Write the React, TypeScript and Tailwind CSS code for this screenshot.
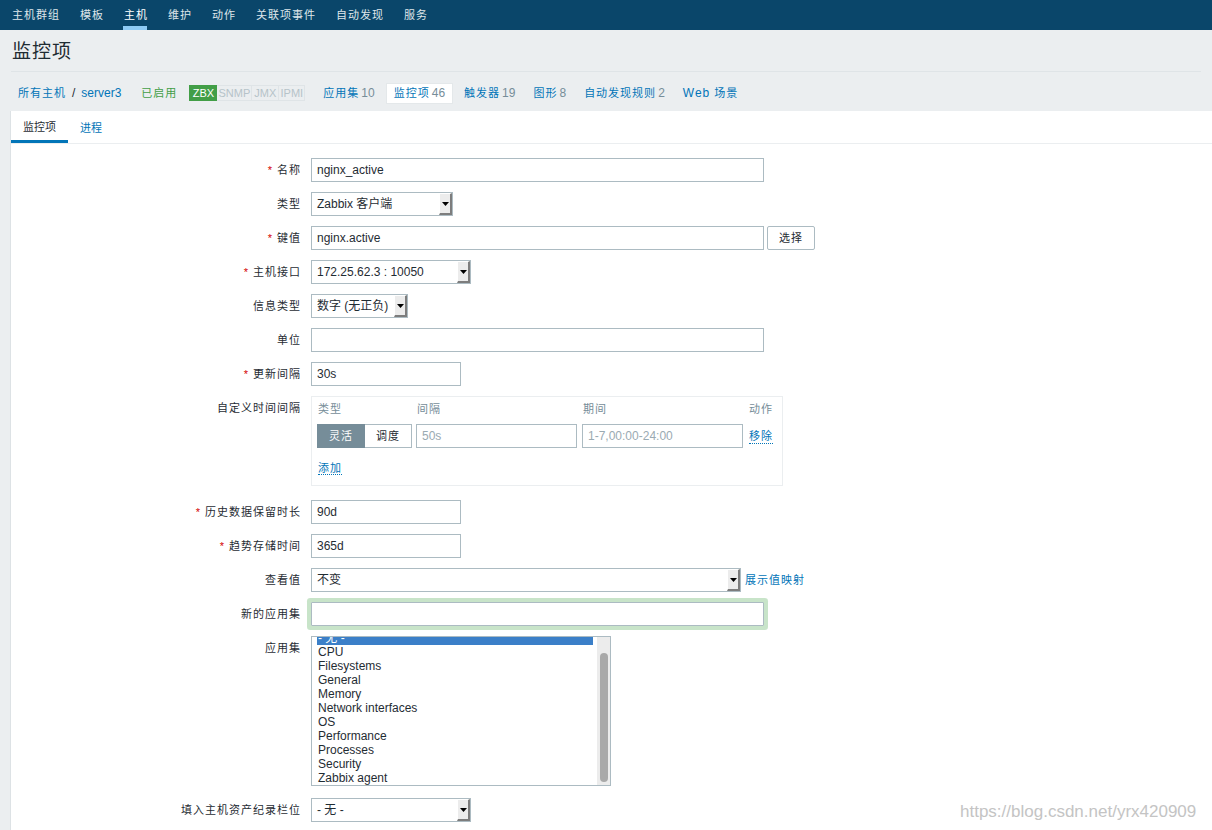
import React from 'react';

const NAV = ['主机群组', '模板', '主机', '维护', '动作', '关联项事件', '自动发现', '服务'];

const APPS = ['CPU', 'Filesystems', 'General', 'Memory', 'Network interfaces', 'OS', 'Performance', 'Processes', 'Security', 'Zabbix agent'];

function Arrow() {
  return (
    <div className="w-[13px] h-full flex items-center justify-center bg-[#ececec] border-t border-l border-t-white border-l-white border-r-2 border-b-2 border-r-[#7d7d7d] border-b-[#7d7d7d]">
      <svg width="7" height="4" viewBox="0 0 7 4">
        <polygon points="0,0 7,0 3.5,4" fill="#000" />
      </svg>
    </div>
  );
}

function Select({ className, text }: { className: string; text: string }) {
  return (
    <div className={`flex h-[24px] border border-[#acbbc2] bg-white ${className}`}>
      <div className="flex-1 flex items-center px-[5px] text-[12px] text-[#1f2c33] whitespace-nowrap overflow-hidden">{text}</div>
      <Arrow />
    </div>
  );
}

function Input({ className, value }: { className: string; value?: string }) {
  return (
    <input
      readOnly
      defaultValue={value}
      className={`h-[24px] border border-[#acbbc2] bg-white px-[5px] text-[12px] text-[#1f2c33] outline-none ${className}`}
    />
  );
}

function Row({ label, req, children }: { label: string; req?: boolean; children: React.ReactNode }) {
  return (
    <div className="flex items-start gap-[10px]">
      <div className="w-[290px] h-[24px] flex items-center justify-end text-[11px] tracking-[1px] text-[#1f2c33] whitespace-nowrap">
        {req && <span className="text-[#d40000] mr-[4px]">*</span>}
        {label}
      </div>
      <div className="flex items-start">{children}</div>
    </div>
  );
}

export default function App() {
  return (
    <div className="relative w-[1212px] h-[830px] overflow-hidden bg-[#ebeef0] font-['Liberation_Sans','Noto_Sans_CJK_SC',sans-serif] text-[#1f2c33]">
      {/* top nav */}
      <div className="h-[30px] bg-[#0a466a] flex pl-[12px] gap-[20px]">
        {NAV.map(n => (
          <div key={n} className={`relative h-full flex items-center text-[11px] tracking-[1px] ${n === '主机' ? 'text-white' : 'text-[#dfe6ea]'}`}>
            {n}
            {n === '主机' && <span className="absolute bottom-0 left-[-1px] right-[1px] h-[4px] bg-[#8ecbf5]" />}
          </div>
        ))}
      </div>

      {/* title */}
      <div className="mx-[11px] h-[42px] flex items-center border-b border-[#dfe4e7]">
        <h1 className="text-[19px] tracking-[1px] text-[#1f2c33] pl-[1px] pt-[4px]">监控项</h1>
      </div>

      {/* breadcrumbs + host tabs */}
      <div className="mx-[11px] h-[39px] flex items-center pl-[7px] pt-[3px] text-[12px]">
        <span className="text-[#0275b8] text-[11px] tracking-[1px]">所有主机</span>
        <span className="mx-[6px]">/</span>
        <span className="text-[#0275b8]">server3</span>
        <span className="ml-[20px] text-[#429e47] text-[11px] tracking-[1px]">已启用</span>
        <div className="ml-[12px] flex h-[16px] text-[11px]">
          <span className="w-[28px] flex items-center justify-center bg-[#429e47] text-white border border-[#429e47]">ZBX</span>
          <span className="w-[35px] flex items-center justify-center border border-l-0 border-[#dfe4e7] text-[#b6c3c9]">SNMP</span>
          <span className="w-[27px] flex items-center justify-center border border-l-0 border-[#dfe4e7] text-[#b6c3c9]">JMX</span>
          <span className="w-[26px] flex items-center justify-center border border-l-0 border-[#dfe4e7] text-[#b6c3c9]">IPMI</span>
        </div>
        <div className="ml-[11px] flex items-center gap-[4px]">
          {[
            ['应用集', '10'],
            ['监控项', '46'],
            ['触发器', '19'],
            ['图形', '8'],
            ['自动发现规则', '2'],
          ].map(([t, c]) => (
            <div key={t} className={`h-[21px] px-[7px] flex items-center ${t === '监控项' ? 'bg-white border border-[#e4e8ea]' : ''}`}>
              <span className="text-[#0275b8] text-[11px] tracking-[1px]">{t}</span>
              <span className="text-[#768d99] ml-[2px]">{c}</span>
            </div>
          ))}
          <div className="h-[21px] px-[7px] flex items-center text-[#0275b8]">
            <span className="tracking-[1px]">Web</span>
            <span className="ml-[4px] text-[11px] tracking-[1px]">场景</span>
          </div>
        </div>
      </div>

      {/* content panel */}
      <div className="ml-[11px] h-full bg-white shadow-[-1px_0_0_#dde2e5]">
        <div className="flex h-[33px] border-b border-[#ebeef0] text-[11px]">
          <div className="h-[32px] px-[12px] flex items-center border-b-[3px] border-[#0275b8] pt-[3px] text-[#1f2c33]">监控项</div>
          <div className="h-[32px] px-[12px] flex items-center pt-[3px] text-[#0275b8]">进程</div>
        </div>

        <div className="flex flex-col gap-[10px] pt-[14px]">
          <Row label="名称" req>
            <Input className="w-[453px]" value="nginx_active" />
          </Row>
          <Row label="类型">
            <Select className="w-[142px]" text="Zabbix 客户端" />
          </Row>
          <Row label="键值" req>
            <Input className="w-[453px]" value="nginx.active" />
            <button className="ml-[3px] w-[48px] h-[24px] border border-[#acbbc2] rounded-[2px] bg-white text-[11px] tracking-[1px] text-[#1f2c33]">选择</button>
          </Row>
          <Row label="主机接口" req>
            <Select className="w-[160px]" text="172.25.62.3 : 10050" />
          </Row>
          <Row label="信息类型">
            <Select className="w-[97px]" text="数字 (无正负)" />
          </Row>
          <Row label="单位">
            <Input className="w-[453px]" />
          </Row>
          <Row label="更新间隔" req>
            <Input className="w-[150px]" value="30s" />
          </Row>
          <Row label="自定义时间间隔">
            <div className="w-[472px] h-[90px] mb-[4px] border border-[#ebeef0] pl-[5px]">
              <div className="h-[24px] flex items-center text-[11px] tracking-[1px] text-[#768d99]">
                <span className="w-[99px] pl-[1px]">类型</span>
                <span className="w-[166px] pl-[1px]">间隔</span>
                <span className="w-[167px] pl-[1px]">期间</span>
                <span>动作</span>
              </div>
              <div className="mt-[3px] flex items-center h-[24px]">
                <div className="flex h-[24px] w-[95px] text-[11px] tracking-[1px]">
                  <span className="w-[48px] flex items-center justify-center bg-[#768d99] border border-[#768d99] text-white">灵活</span>
                  <span className="w-[47px] flex items-center justify-center border border-l-0 border-[#acbbc2] text-[#1f2c33]">调度</span>
                </div>
                <Input className="ml-[4px] w-[161px] text-[#9aaab2]" value="50s" />
                <Input className="ml-[5px] w-[161px] text-[#9aaab2]" value="1-7,00:00-24:00" />
                <span className="ml-[6px] text-[11px] tracking-[1px] text-[#0275b8] border-b border-dotted border-[#0275b8] leading-[14px]">移除</span>
              </div>
              <div className="mt-[7px] pl-[1px]">
                <span className="text-[11px] tracking-[1px] text-[#0275b8] border-b border-dotted border-[#0275b8] leading-[14px]">添加</span>
              </div>
            </div>
          </Row>
          <Row label="历史数据保留时长" req>
            <Input className="w-[150px]" value="90d" />
          </Row>
          <Row label="趋势存储时间" req>
            <Input className="w-[150px]" value="365d" />
          </Row>
          <Row label="查看值">
            <Select className="w-[430px]" text="不变" />
            <span className="ml-[4px] h-[24px] flex items-center text-[11px] tracking-[1px] text-[#0275b8]">展示值映射</span>
          </Row>
          <Row label="新的应用集">
            <Input className="w-[453px] shadow-[0_0_0_4px_#c8e4c9] rounded-[1px]" />
          </Row>
          <Row label="应用集">
            <div className="w-[300px] h-[150px] mb-[2px] border border-[#acbbc2] flex overflow-hidden">
              <div className="flex-1 pl-[5px] pr-[4px] overflow-hidden">
                <div className="mt-[-6px] text-[12px] leading-[14px] text-[#1f2c33]">
                  <div className="bg-[#3b7fc8] text-white pl-px">- 无 -</div>
                  {APPS.map(a => (
                    <div key={a} className="pl-px">{a}</div>
                  ))}
                </div>
              </div>
              <div className="w-[13px] h-full bg-[#ececec] flex justify-center pt-[16px] pb-[3px]">
                <div className="w-[8px] h-full rounded-full bg-[#a9a9a9]" />
              </div>
            </div>
          </Row>
          <Row label="填入主机资产纪录栏位">
            <Select className="w-[160px]" text="- 无 -" />
          </Row>
        </div>
      </div>

      <div className="absolute left-[960px] top-[799px] text-[17px] text-[#c4c4c4] whitespace-nowrap">https://blog.csdn.net/yrx420909</div>
    </div>
  );
}
